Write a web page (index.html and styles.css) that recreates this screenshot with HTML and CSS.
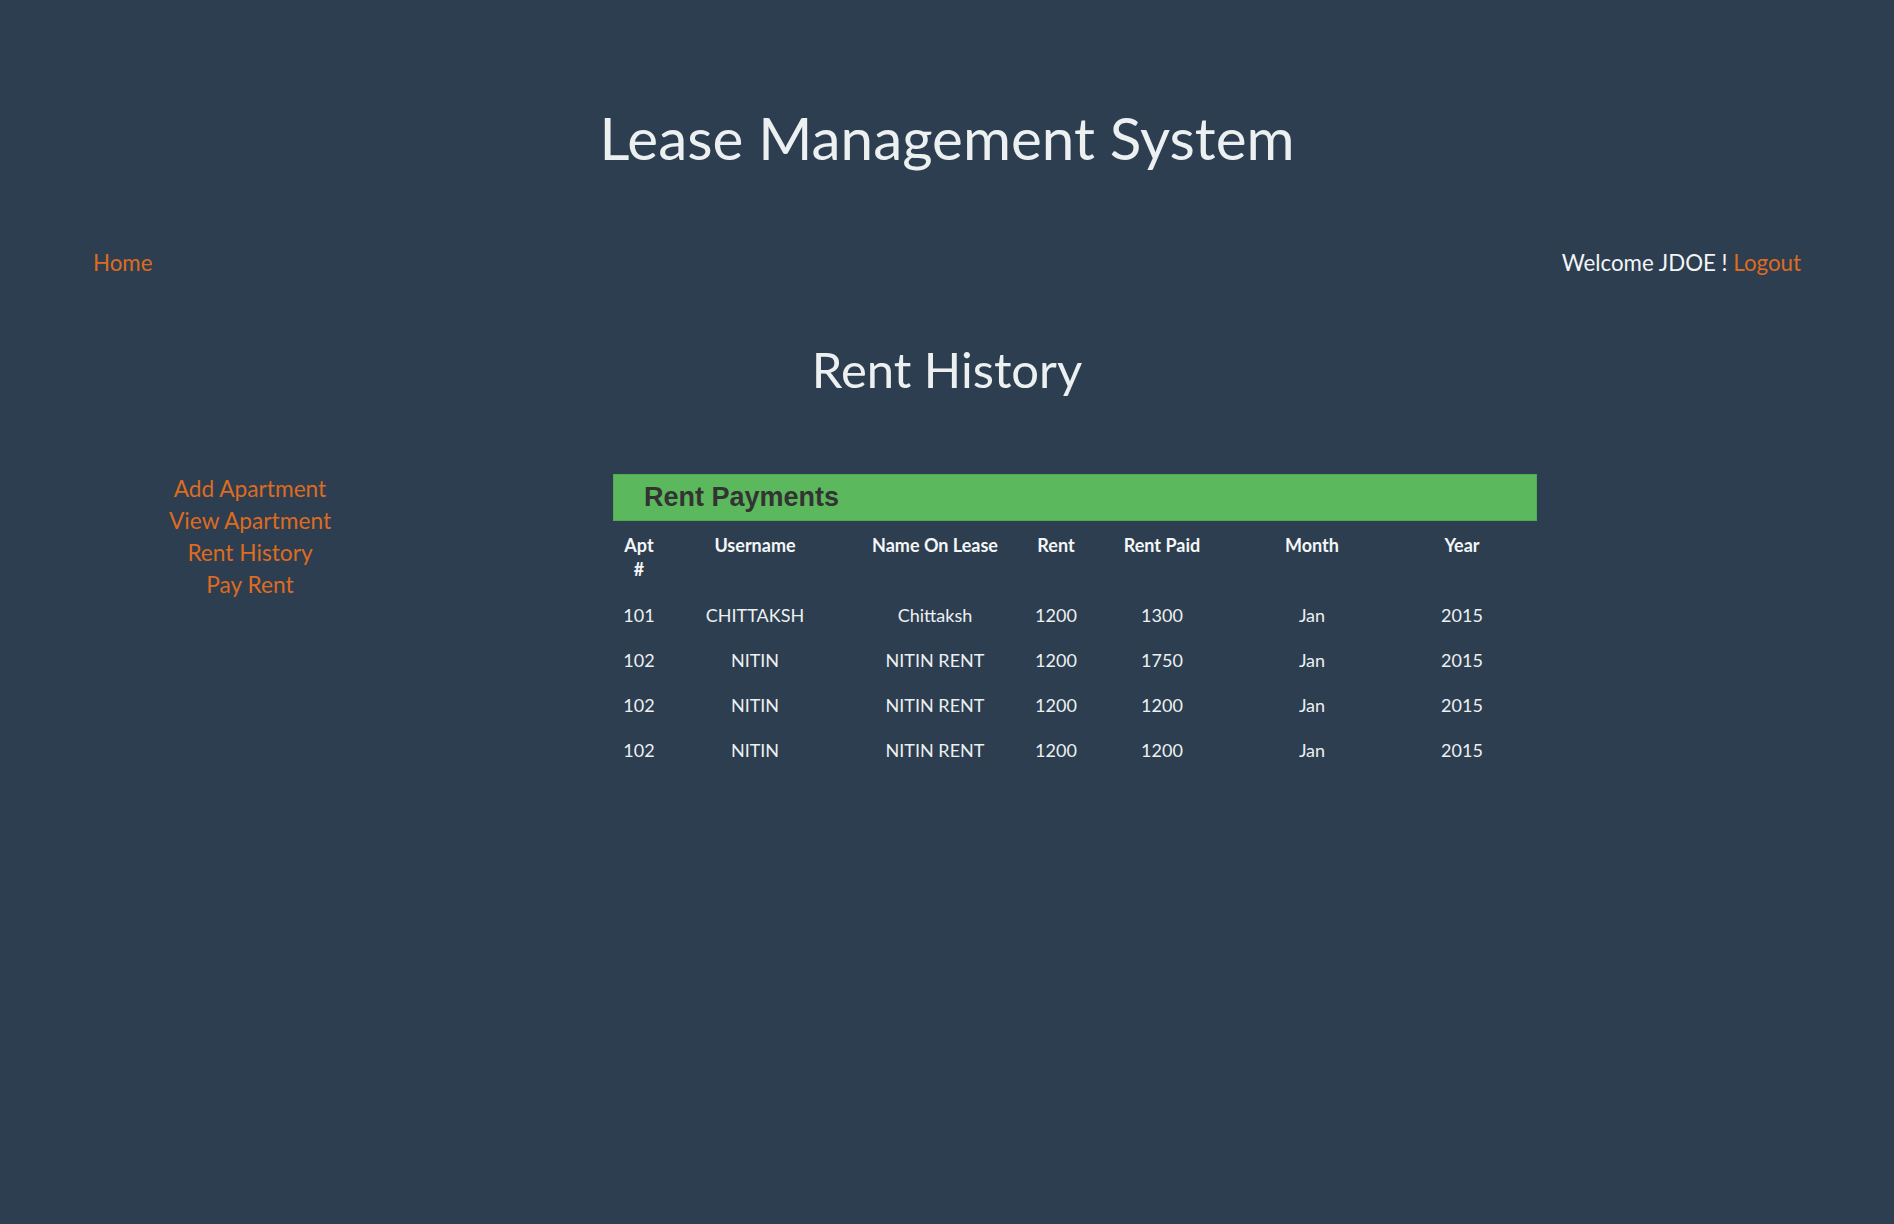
FILE: index.html
```html
<!DOCTYPE html>
<html lang="en">
<head>
<meta charset="utf-8">
<title>Rent History</title>
<link rel="stylesheet" href="styles.css">
</head>
<body>
<header class="site-header">
  <h1 class="site-title">Lease Management System</h1>
</header>
<nav class="top-nav">
  <a class="link" href="#">Home</a>
  <div class="welcome">Welcome JDOE ! <a class="link" href="#">Logout</a></div>
</nav>
<h2 class="page-title">Rent History</h2>
<div class="layout">
  <aside class="sidebar">
    <a class="link" href="#">Add Apartment</a>
    <a class="link" href="#">View Apartment</a>
    <a class="link" href="#">Rent History</a>
    <a class="link" href="#">Pay Rent</a>
  </aside>
  <main class="content">
    <div class="panel">
      <div class="panel-heading">Rent Payments</div>
      <table class="payments">
        <colgroup>
          <col class="c-apt"><col class="c-user"><col class="c-name"><col class="c-rent"><col class="c-paid"><col class="c-month"><col class="c-year">
        </colgroup>
        <thead>
          <tr><th>Apt #</th><th>Username</th><th>Name On Lease</th><th>Rent</th><th>Rent Paid</th><th>Month</th><th>Year</th></tr>
        </thead>
        <tbody>
          <tr><td>101</td><td>CHITTAKSH</td><td>Chittaksh</td><td>1200</td><td>1300</td><td>Jan</td><td>2015</td></tr>
          <tr><td>102</td><td>NITIN</td><td>NITIN RENT</td><td>1200</td><td>1750</td><td>Jan</td><td>2015</td></tr>
          <tr><td>102</td><td>NITIN</td><td>NITIN RENT</td><td>1200</td><td>1200</td><td>Jan</td><td>2015</td></tr>
          <tr><td>102</td><td>NITIN</td><td>NITIN RENT</td><td>1200</td><td>1200</td><td>Jan</td><td>2015</td></tr>
        </tbody>
      </table>
    </div>
  </main>
</div>
</body>
</html>
```
FILE: styles.css
```css
html, body {
  margin: 0;
  padding: 0;
}
body {
  background: #2c3e50;
  color: #ecf0f1;
  font-family: Lato, "Open Sans", sans-serif;
  min-height: 1224px;
}
.link {
  color: #dd6b20;
  text-decoration: none;
}
.site-header {
  padding-top: 102px;
}
.site-title {
  margin: 0;
  font-size: 58.4px;
  font-weight: 400;
  line-height: 1.2;
  text-align: center;
  color: #ecf0f1;
}
.top-nav {
  display: flex;
  justify-content: space-between;
  align-items: baseline;
  margin-top: 77.7px;
  padding: 0 93px;
  font-size: 22.3px;
  line-height: 1.2;
}
.welcome {
  color: #f2f4f5;
}
.page-title {
  margin: 63.8px 0 0;
  font-size: 49px;
  font-weight: 400;
  line-height: 1.2;
  text-align: center;
}
.layout {
  display: flex;
  margin-top: 74.6px;
}
.sidebar {
  width: 500px;
  display: flex;
  flex-direction: column;
  align-items: center;
  margin-top: -1.2px;
  font-size: 22.7px;
  line-height: 32px;
}
.content {
  padding-left: 113px;
}
.panel {
  width: 924px;
}
.panel-heading {
  background: #5cb85c;
  border: 1px solid #4cae4c;
  height: 45px;
  box-sizing: content-box;
  padding-left: 30px;
  color: #333;
  font-family: "Liberation Sans", Arial, sans-serif;
  font-weight: 700;
  font-size: 27px;
  line-height: 45px;
}
.payments {
  width: 924px;
  border-collapse: collapse;
  table-layout: fixed;
  font-size: 18px;
  line-height: 24px;
}
.c-apt { width: 52px; }
.c-user { width: 180px; }
.c-name { width: 180px; }
.c-rent { width: 62px; }
.c-paid { width: 150px; }
.c-month { width: 150px; }
.c-year { width: 150px; }
.payments th {
  font-weight: 700;
  color: #f4f6f7;
  padding: 12.5px 8px 11.2px;
  text-align: center;
  vertical-align: top;
}
.payments td {
  padding: 10.5px 8px;
  text-align: center;
  color: #ecf0f1;
}
```
